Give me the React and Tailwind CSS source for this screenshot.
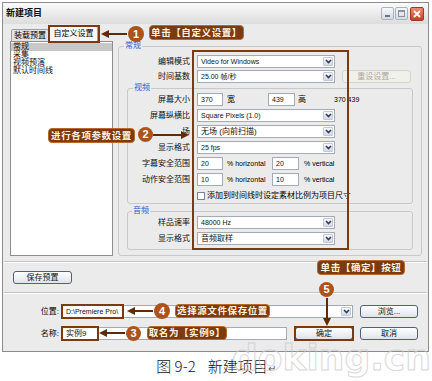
import React from 'react';

const FONT = "font-['Liberation_Sans','Noto_Sans_CJK_SC',sans-serif]";

const Chevron = () => (
  <svg width="7" height="5" viewBox="0 0 7 5">
    <path d="M1 1 L3.5 3.6 L6 1" fill="none" stroke="#2f3d58" strokeWidth="1.6" />
  </svg>
);

// combo box with the little XP drop button
const Select = ({ className = 'w-[138px]', text, cjk }) => (
  <div className={`flex h-[13px] shrink-0 border border-[#a3abb8] bg-white ${className}`}>
    <div className={`flex flex-1 items-center overflow-hidden whitespace-nowrap px-[3px] leading-none text-[#111] ${cjk ? 'text-[8px]' : 'text-[7px]'}`}>
      {text}
    </div>
    <div className="m-px flex w-[10px] items-center justify-center rounded-[1px] border border-[#c2c9d6] bg-gradient-to-b from-[#f7f8fb] to-[#d3d9e4]">
      <Chevron />
    </div>
  </div>
);

const Input = ({ className = 'w-[26px]', text }) => (
  <div className={`flex h-[13px] shrink-0 items-center border border-[#a3abb8] bg-white px-[3px] text-[7px] leading-none text-[#111] ${className}`}>
    {text}
  </div>
);

const Button = ({ className, children, disabled }) => (
  <div
    className={`flex h-[13px] shrink-0 items-center justify-center rounded-[3px] border text-[8px] leading-none ${
      disabled
        ? 'border-[#d4d4cc] bg-[#f1f1ec] text-[#a9a9a3]'
        : 'border-[#52607c] bg-gradient-to-b from-white to-[#dfe3ea] text-[#111]'
    } ${className}`}
  >
    {children}
  </div>
);

const Row = ({ label, labelW, children }) => (
  <div className="flex h-[13px] items-center">
    <div className={`shrink-0 pr-[7px] text-right text-[8px] leading-none text-[#111] ${labelW}`}>{label}</div>
    {children}
  </div>
);

const Tag = ({ className, children }) => (
  <div className={`absolute flex items-center justify-center whitespace-nowrap rounded-[4px] border border-[#b8692e] bg-[#7a3a12] text-[9.5px] font-bold leading-none tracking-[0.6px] text-[#fff3df] ${className}`}>
    {children}
  </div>
);

const Num = ({ className, children }) => (
  <div className={`absolute flex items-center justify-center rounded-full bg-[#ab531a] text-[11px] font-bold leading-none text-white ${className}`}>
    {children}
  </div>
);

export default function App() {
  return (
    <div className={`relative h-[381px] w-[432px] overflow-hidden bg-white ${FONT}`}>
      {/* dialog window */}
      <div className="ml-[2px] mt-[2px] flex h-[350px] w-[427px] flex-col border border-[#8c8c8c] bg-[#ebebeb]">
        {/* title bar */}
        <div className="flex h-[21px] items-center bg-gradient-to-b from-[#fbfbfb] to-[#dcdcdc] pl-[3px] pr-[4px]">
          <span className="text-[9px] font-bold leading-none text-[#111]">新建项目</span>
          <div className="ml-auto flex items-center gap-[1px]">
            <div className="flex h-[13px] w-[13px] items-end justify-center rounded-[2px] border border-[#aab2bd] bg-gradient-to-b from-[#f6f8fa] to-[#d5dbe3] pb-[2px]">
              <div className="h-[2px] w-[5px] bg-[#6a7382]" />
            </div>
            <div className="flex h-[13px] w-[13px] items-center justify-center rounded-[2px] border border-[#aab2bd] bg-gradient-to-b from-[#f6f8fa] to-[#d5dbe3]">
              <div className="h-[7px] w-[7px] border border-t-2 border-[#8b93a1]" />
            </div>
            <div className="ml-[1px] flex h-[14px] w-[14px] items-center justify-center rounded-[2px] border border-[#9b3a26] bg-gradient-to-b from-[#f08a70] to-[#cc3a1f]">
              <svg width="8" height="8" viewBox="0 0 8 8">
                <path d="M1 1 L7 7 M7 1 L1 7" stroke="#fff" strokeWidth="1.8" />
              </svg>
            </div>
          </div>
        </div>

        {/* tabs */}
        <div className="flex h-[17px] items-end pl-[8px]">
          <div className="flex h-[12px] w-[38px] items-center justify-center rounded-t-[2px] border border-b-0 border-[#9aa0a8] bg-[#e3e3e3] text-[8px] leading-none">
            装载预置
          </div>
          <div className="flex h-[15px] w-[49px] items-center justify-center rounded-t-[2px] border border-b-0 border-[#9aa0a8] bg-[#f8f8f8] text-[8px] leading-none">
            自定义设置
          </div>
        </div>

        {/* list + settings */}
        <div className="flex h-[215px] gap-[5px] pl-[7px]">
          <div className="h-full w-[103px] border border-[#8d8d8d] bg-white pt-px text-[8px] leading-[8px] text-[#111]">
            <div className="bg-[#c8c8c8] pl-[2px]">常规</div>
            <div className="pl-[2px]">采集</div>
            <div className="pl-[2px]">视频预演</div>
            <div className="pl-[2px]">默认时间线</div>
          </div>

          <fieldset className="h-full w-[304px] rounded-[3px] border border-[#c9c9c9]">
            <legend className="ml-[5px] px-px text-[8px] leading-[10px] text-[#2e5fc7]">常规</legend>
            <div className="pt-[4px]">
              <Row label="编辑模式" labelW="w-[78px]">
                <Select text="Video for Windows" />
              </Row>
              <div className="mt-[2px]">
                <Row label="时间基数" labelW="w-[78px]">
                  <Select text="25.00 帧/秒" />
                  <Button disabled className="ml-[7px] w-[69px]">重设设置...</Button>
                </Row>
              </div>

              <fieldset className="ml-[8px] w-[286px] rounded-[3px] border border-[#c9c9c9] pb-px">
                <legend className="ml-[5px] px-px text-[8px] leading-[10px] text-[#2e5fc7]">视频</legend>
                <div className="flex flex-col gap-[3px]">
                  <Row label="屏幕大小" labelW="w-[69px]">
                    <Input text="370" />
                    <span className="ml-[4px] w-[41px] text-[8px] leading-none">宽</span>
                    <Input className="w-[27px]" text="439" />
                    <span className="ml-[3px] w-[36px] text-[8px] leading-none">高</span>
                    <span className="text-[7px] leading-none">370 439</span>
                  </Row>
                  <Row label="屏幕纵横比" labelW="w-[69px]">
                    <Select text="Square Pixels (1.0)" />
                  </Row>
                  <Row label="场" labelW="w-[69px]">
                    <Select text="无场 (向前扫描)" cjk />
                  </Row>
                  <Row label="显示格式" labelW="w-[69px]">
                    <Select text="25 fps" />
                  </Row>
                  <Row label="字幕安全范围" labelW="w-[69px]">
                    <Input text="20" />
                    <span className="ml-[4px] w-[45px] text-[7px] leading-none">% horizontal</span>
                    <Input className="w-[27px]" text="20" />
                    <span className="ml-[5px] text-[7px] leading-none">% vertical</span>
                  </Row>
                  <Row label="动作安全范围" labelW="w-[69px]">
                    <Input text="10" />
                    <span className="ml-[4px] w-[45px] text-[7px] leading-none">% horizontal</span>
                    <Input className="w-[27px]" text="10" />
                    <span className="ml-[5px] text-[7px] leading-none">% vertical</span>
                  </Row>
                  <Row label="" labelW="w-[69px]">
                    <div className="h-[8px] w-[8px] border border-[#7a8595] bg-white" />
                    <span className="ml-[2px] whitespace-nowrap text-[8px] leading-none">添加到时间线时设定素材比例为项目尺寸</span>
                  </Row>
                </div>
              </fieldset>

              <fieldset className="ml-[8px] mt-[2px] w-[286px] rounded-[3px] border border-[#c9c9c9] pb-[4px]">
                <legend className="ml-[4px] px-px text-[8px] leading-[10px] text-[#2e5fc7]">音频</legend>
                <div className="flex flex-col gap-[3px]">
                  <Row label="样品速率" labelW="w-[69px]">
                    <Select text="48000 Hz" />
                  </Row>
                  <Row label="显示格式" labelW="w-[69px]">
                    <Select text="音频取样" cjk />
                  </Row>
                </div>
              </fieldset>
            </div>
          </fieldset>
        </div>

        <div className="mx-px mt-[5px] h-[2px] border-b border-t border-b-white border-t-[#c3c3c3]" />

        <div className="mt-[8px] pl-[10px]">
          <Button className="w-[59px]">保存预置</Button>
        </div>

        <div className="mx-px mt-[8px] h-[2px] border-b border-t border-b-white border-t-[#c3c3c3]" />

        {/* location */}
        <div className="mt-[11px] flex h-[13px] items-center">
          <div className="w-[56px] shrink-0 text-right text-[8px] leading-none">位置:</div>
          <Select className="ml-[3px] w-[291px]" text="D:\Premiere Pro\" />
          <Button className="ml-[7px] w-[58px]">浏览...</Button>
        </div>

        {/* name */}
        <div className="mt-[9px] flex h-[13px] items-center">
          <div className="w-[56px] shrink-0 text-right text-[8px] leading-none">名称:</div>
          <Input className="ml-[3px] w-[225px] text-[8px]" text="实例9" />
          <Button className="ml-[8px] w-[58px]">确定</Button>
          <Button className="ml-[7px] w-[58px]">取消</Button>
        </div>
      </div>

      {/* caption */}
      <div className="mt-[5px] text-center text-[15px] font-light leading-[18px] text-[#111] font-['Noto_Sans_CJK_SC',sans-serif]">
        图 9-2<span className="ml-[12px]">新建项目</span>
        <span className="text-[10px] text-[#555]">↵</span>
      </div>

      {/* watermark */}
      <div className="pointer-events-none absolute left-[232px] top-[340px] font-['DejaVu_Sans',sans-serif] text-[36px] font-bold leading-none text-transparent opacity-70 [-webkit-text-stroke:1px_#c8c8c8]">
        doking.cn
      </div>

      {/* annotation frames and arrows */}
      <svg className="pointer-events-none absolute left-0 top-0" width="432" height="381">
        <g fill="none" stroke="#7b3a10" strokeWidth="2">
          <rect x="49" y="26" width="50" height="16" />
          <rect x="193" y="51" width="155" height="198" />
          <rect x="62" y="305" width="61" height="13" />
          <rect x="62" y="327" width="36" height="13" />
          <rect x="295" y="327" width="58" height="13" />
        </g>
        <g stroke="#5e2b0b" strokeWidth="2">
          <line x1="108" y1="34" x2="127" y2="34" />
          <line x1="153" y1="135" x2="182" y2="135" />
          <line x1="134" y1="311" x2="153" y2="311" />
          <line x1="106" y1="333" x2="125" y2="333" />
          <line x1="327" y1="298" x2="327" y2="319" />
        </g>
        <g fill="#5e2b0b">
          <polygon points="101,34 109,30 109,38" />
          <polygon points="189,135 181,131 181,139" />
          <polygon points="127,311 135,307 135,315" />
          <polygon points="99,333 107,329 107,337" />
          <polygon points="327,326 323,318 331,318" />
        </g>
      </svg>

      <Num className="left-[128px] top-[26px] h-[16px] w-[16px]">1</Num>
      <Tag className="left-[149px] top-[25px] h-[15px] w-[95px]">单击【自定义设置】</Tag>

      <Tag className="left-[48px] top-[128px] h-[15px] w-[87px]">进行各项参数设置</Tag>
      <Num className="left-[138px] top-[127px] h-[15px] w-[15px]">2</Num>

      <Num className="left-[154px] top-[303px] h-[16px] w-[16px]">4</Num>
      <Tag className="left-[175px] top-[304px] h-[14px] w-[95px]">选择源文件保存位置</Tag>

      <Num className="left-[126px] top-[326px] h-[15px] w-[15px]">3</Num>
      <Tag className="left-[147px] top-[326px] h-[14px] w-[80px]">取名为【实例9】</Tag>

      <Tag className="left-[317px] top-[260px] h-[15px] w-[88px]">单击【确定】按钮</Tag>
      <Num className="left-[319px] top-[282px] h-[15px] w-[15px]">5</Num>
    </div>
  );
}
